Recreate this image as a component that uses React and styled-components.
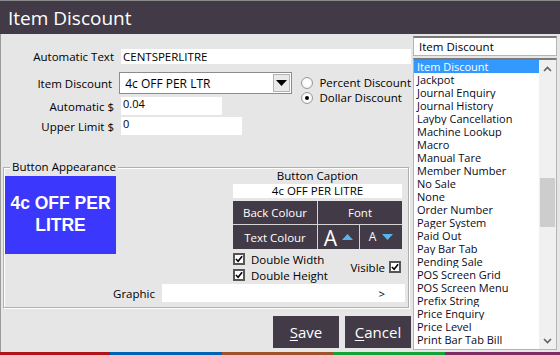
import React from 'react';
import styled, { createGlobalStyle } from 'styled-components';

const GlobalStyle = createGlobalStyle`
    html, body { margin: 0; padding: 0; background: #e6e6e6; }
    body { font-family: "Open Sans", "Noto Sans", sans-serif; color: #000; }
    * { box-sizing: border-box; }
`;

const Window = styled.div`
    width: 560px;
    height: 355px;
    display: flex;
    flex-direction: column;
    background: #e6e6e6;
    overflow: hidden;
`;

const TitleBar = styled.div`
    height: 34px;
    flex: none;
    border-top: 1px solid #8a8a8a;
    background: #423b47;
    color: #fff;
    font-size: 19px;
    display: flex;
    align-items: center;
    padding-left: 8px;
`;

const Body = styled.div`
    flex: 1;
    display: flex;
    border-left: 1px solid #9a9a9a;
    min-height: 0;
`;

const LeftCol = styled.div`
    width: 410px;
    display: flex;
    flex-direction: column;
`;

const RightCol = styled.div`
    width: 144px;
    margin-left: 2px;
    padding-top: 2px;
    display: flex;
    flex-direction: column;
`;

const Form = styled.div`
    padding-top: 15px;
    display: flex;
    flex-direction: column;
`;

const FieldRow = styled.div`
    display: flex;
    align-items: center;
    height: ${p => p.h}px;
    margin-top: ${p => p.mt || 0}px;
`;

const Label = styled.div`
    width: ${p => p.w || 113}px;
    margin-right: 7px;
    text-align: right;
    font-size: 11.5px;
    white-space: nowrap;
`;

const TextBox = styled.div`
    width: ${p => p.w}px;
    height: 100%;
    background: #fff;
    font-size: ${p => p.fs || 11.5}px;
    padding-left: 2px;
    display: flex;
    align-items: ${p => p.top ? 'flex-start' : 'center'};
    line-height: 1.2;
    white-space: nowrap;
`;

const Select = styled.div`
    width: 176px;
    height: 100%;
    background: #fff;
    border: 1px solid #8c8c8c;
    display: flex;
    align-items: center;
    font-size: 12px;
    padding-left: 5px;
`;

const SelectText = styled.span`
    flex: 1;
`;

const SelectArrow = styled.span`
    width: 17px;
    height: 18px;
    margin-right: 1px;
    background: #e9e9e9;
    border: 1px solid #b4b4b4;
    display: flex;
    align-items: center;
    justify-content: center;
`;

const RadioGroup = styled.div`
    flex: none;
    align-self: flex-start;
    margin-left: 9px;
    padding-top: 3px;
    display: flex;
    flex-direction: column;
    white-space: nowrap;
`;

const RadioRow = styled.div`
    display: flex;
    align-items: center;
    height: 15px;
    font-size: 11.5px;
    gap: 6px;
`;

const RadioDot = styled.span`
    width: 12px;
    height: 12px;
    flex: none;
    border-radius: 50%;
    border: 1px solid #9a9a9a;
    background: radial-gradient(circle, #fff 40%, #e4e4e4 100%);
    display: flex;
    align-items: center;
    justify-content: center;
    &::after {
        content: '';
        width: 4px;
        height: 4px;
        border-radius: 50%;
        background: ${p => p.on ? '#000' : 'transparent'};
    }
`;

const Group = styled.div`
    position: relative;
    margin-top: 32px;
    margin-left: 2px;
    width: 406px;
    height: 141px;
    border: 1px solid #b0b0b0;
    box-shadow: 1px 1px 0 #fff, inset 1px 1px 0 #fff;
    padding-left: 1px;
    display: flex;
    flex-direction: column;
`;

const Legend = styled.span`
    position: absolute;
    top: -9px;
    left: 6px;
    padding: 0 2px;
    background: #e6e6e6;
    font-size: 11.5px;
    line-height: 16px;
`;

const GroupTop = styled.div`
    display: flex;
    align-items: flex-start;
`;

const Preview = styled.div`
    width: 111px;
    height: 78px;
    margin-top: 8px;
    background: #3b37fd;
    color: #fff;
    font-family: "Liberation Sans", Arial, sans-serif;
    font-weight: bold;
    font-size: 17.5px;
    line-height: 22px;
    text-align: center;
    display: flex;
    align-items: center;
    justify-content: center;
    padding-bottom: 2px;
`;

const Controls = styled.div`
    width: 169px;
    margin-left: 117px;
    display: flex;
    flex-direction: column;
`;

const CaptionLabel = styled.div`
    height: 15px;
    text-align: center;
    font-size: 11.5px;
    line-height: 15px;
`;

const CaptionBox = styled.div`
    height: 14px;
    margin-top: 1px;
    background: #fff;
    font-size: 11.5px;
    line-height: 14px;
    text-align: center;
`;

const ButtonGrid = styled.div`
    margin-top: 3px;
    display: grid;
    grid-template-columns: 84px 41px 42px;
    grid-template-rows: 23px 24px;
    gap: 1px;
    background: #d4d4d4;
`;

const GridBtn = styled.div`
    grid-column: ${p => p.span ? 'span 2' : 'auto'};
    background: #423b47;
    color: #fff;
    font-size: 11.5px;
    display: flex;
    align-items: center;
    justify-content: center;
    gap: ${p => p.gap || 0}px;
`;

const BigA = styled.span`
    font-size: ${p => p.size}px;
    line-height: 1;
    margin-top: ${p => p.mt || 0}px;
`;

const Checks = styled.div`
    margin-top: 4px;
    display: flex;
    justify-content: space-between;
    align-items: center;
`;

const CheckCol = styled.div`
    display: flex;
    flex-direction: column;
    gap: 4px;
`;

const CheckRow = styled.div`
    display: flex;
    align-items: center;
    gap: ${p => p.gap || 6}px;
    height: 12px;
    font-size: 11.5px;
    margin-right: ${p => p.mr || 0}px;
`;

const Box = styled.span`
    width: 12px;
    height: 12px;
    border: 2px solid #555;
    background: #fff;
    display: flex;
    align-items: center;
    justify-content: center;
`;

const GraphicRow = styled.div`
    margin-top: 3px;
    height: 18px;
    display: flex;
    align-items: center;
`;

const GraphicBox = styled.div`
    width: 243px;
    height: 100%;
    background: #fff;
    font-size: 11.5px;
    display: flex;
    align-items: center;
    justify-content: flex-end;
    padding-right: 20px;
`;

const Actions = styled.div`
    margin-top: 8px;
    display: flex;
    justify-content: flex-end;
    gap: 6px;
`;

const ActionBtn = styled.div`
    width: 66px;
    height: 32px;
    background: #423b47;
    color: #fff;
    font-size: 15px;
    display: flex;
    align-items: center;
    justify-content: center;
    u { text-decoration: underline; text-underline-offset: 2px; }
`;

const SearchBox = styled.div`
    height: 20px;
    background: #fff;
    border: 1px solid #b4b4b4;
    border-top: 2px solid #7a7a7a;
    font-size: 11.5px;
    padding-left: 5px;
    display: flex;
    align-items: center;
`;

const List = styled.div`
    margin-top: 2px;
    height: 292px;
    background: #fff;
    border: 1px solid #b4b4b4;
    border-top: 2px solid #7a7a7a;
    display: flex;
    overflow: hidden;
`;

const Items = styled.div`
    flex: 1;
`;

const Item = styled.div`
    height: 13px;
    line-height: 13px;
    font-size: 11px;
    padding-left: 3px;
    white-space: nowrap;
    overflow: hidden;
    background: ${p => p.sel ? '#3399ff' : 'transparent'};
    color: ${p => p.sel ? '#fff' : '#0a0a1a'};
`;

const ScrollBar = styled.div`
    width: 17px;
    background: #f0f0f0;
    display: flex;
    flex-direction: column;
`;

const ScrollArrow = styled.div`
    height: 17px;
    display: flex;
    align-items: center;
    justify-content: center;
`;

const Track = styled.div`
    flex: 1;
    padding-top: 101px;
`;

const Thumb = styled.div`
    width: 15px;
    height: 49px;
    margin-left: 1px;
    background: #cdcdcd;
`;

const Strip = styled.div`
    height: 3px;
    flex: none;
    display: flex;
`;

const StripPart = styled.div`
    width: ${p => p.w}px;
    background: ${p => p.c};
`;

const Chevron = ({ up }) => (
    <svg width="9" height="6" viewBox="0 0 9 6">
        <polyline points={up ? '1,5 4.5,1.5 8,5' : '1,1 4.5,4.5 8,1'} fill="none" stroke="#606060" strokeWidth="1.6" />
    </svg>
);

const Tick = () => (
    <svg width="9" height="8" viewBox="0 0 9 8">
        <polyline points="1,4 3.5,6.5 8,1" fill="none" stroke="#000" strokeWidth="1.8" />
    </svg>
);

const Tri = ({ up, color }) => (
    <svg width="11" height="6" viewBox="0 0 11 6">
        <polygon points={up ? '0,6 5.5,0 11,6' : '0,0 5.5,6 11,0'} fill={color} />
    </svg>
);

const items = [
    'Item Discount', 'Jackpot', 'Journal Enquiry', 'Journal History', 'Layby Cancellation',
    'Machine Lookup', 'Macro', 'Manual Tare', 'Member Number', 'No Sale', 'None',
    'Order Number', 'Pager System', 'Paid Out', 'Pay Bar Tab', 'Pending Sale',
    'POS Screen Grid', 'POS Screen Menu', 'Prefix String', 'Price Enquiry', 'Price Level',
    'Print Bar Tab Bill',
];

const strip = [
    ['#b01418', 110], ['#0062b4', 112], ['#a0522d', 111], ['#12a236', 112], ['#7e2c62', 115],
];

const App = () => {
    return (
        <>
            <GlobalStyle />
            <Window>
                <TitleBar>Item Discount</TitleBar>
                <Body>
                    <LeftCol>
                        <Form>
                            <FieldRow h={15}>
                                <Label>Automatic Text</Label>
                                <TextBox w={290}>CENTSPERLITRE</TextBox>
                            </FieldRow>
                            <FieldRow h={22} mt={8}>
                                <Label>Item Discount</Label>
                                <Select>
                                    <SelectText>4c OFF PER LTR</SelectText>
                                    <SelectArrow><Tri color="#000" /></SelectArrow>
                                </Select>
                                <RadioGroup>
                                    <RadioRow><RadioDot />Percent Discount</RadioRow>
                                    <RadioRow><RadioDot on />Dollar Discount</RadioRow>
                                </RadioGroup>
                            </FieldRow>
                            <FieldRow h={18} mt={3}>
                                <Label>Automatic $</Label>
                                <TextBox w={101} top fs={11}>0.04</TextBox>
                            </FieldRow>
                            <FieldRow h={18} mt={2}>
                                <Label>Upper Limit $</Label>
                                <TextBox w={121} top fs={11}>0</TextBox>
                            </FieldRow>
                        </Form>
                        <Group>
                            <Legend>Button Appearance</Legend>
                            <GroupTop>
                                <Preview>4c OFF PER<br />LITRE</Preview>
                                <Controls>
                                    <CaptionLabel>Button Caption</CaptionLabel>
                                    <CaptionBox>4c OFF PER LITRE</CaptionBox>
                                    <ButtonGrid>
                                        <GridBtn>Back Colour</GridBtn>
                                        <GridBtn span>Font</GridBtn>
                                        <GridBtn>Text Colour</GridBtn>
                                        <GridBtn gap={5}><BigA size={21} mt={2}>A</BigA><Tri up color="#5ab4ea" /></GridBtn>
                                        <GridBtn gap={6}><BigA size={12}>A</BigA><Tri color="#5ab4ea" /></GridBtn>
                                    </ButtonGrid>
                                    <Checks>
                                        <CheckCol>
                                            <CheckRow><Box><Tick /></Box>Double Width</CheckRow>
                                            <CheckRow><Box><Tick /></Box>Double Height</CheckRow>
                                        </CheckCol>
                                        <CheckRow gap={4} mr={1}>Visible<Box><Tick /></Box></CheckRow>
                                    </Checks>
                                </Controls>
                            </GroupTop>
                            <GraphicRow>
                                <Label w={150}>Graphic</Label>
                                <GraphicBox>&gt;</GraphicBox>
                            </GraphicRow>
                        </Group>
                        <Actions>
                            <ActionBtn><span><u>S</u>ave</span></ActionBtn>
                            <ActionBtn><span><u>C</u>ancel</span></ActionBtn>
                        </Actions>
                    </LeftCol>
                    <RightCol>
                        <SearchBox>Item Discount</SearchBox>
                        <List>
                            <Items>
                                {items.map((it, i) => <Item key={it} sel={i === 0}>{it}</Item>)}
                            </Items>
                            <ScrollBar>
                                <ScrollArrow><Chevron up /></ScrollArrow>
                                <Track><Thumb /></Track>
                                <ScrollArrow><Chevron /></ScrollArrow>
                            </ScrollBar>
                        </List>
                    </RightCol>
                </Body>
                <Strip>
                    {strip.map(([c, w]) => <StripPart key={c} c={c} w={w} />)}
                </Strip>
            </Window>
        </>
    );
};

export default App;
